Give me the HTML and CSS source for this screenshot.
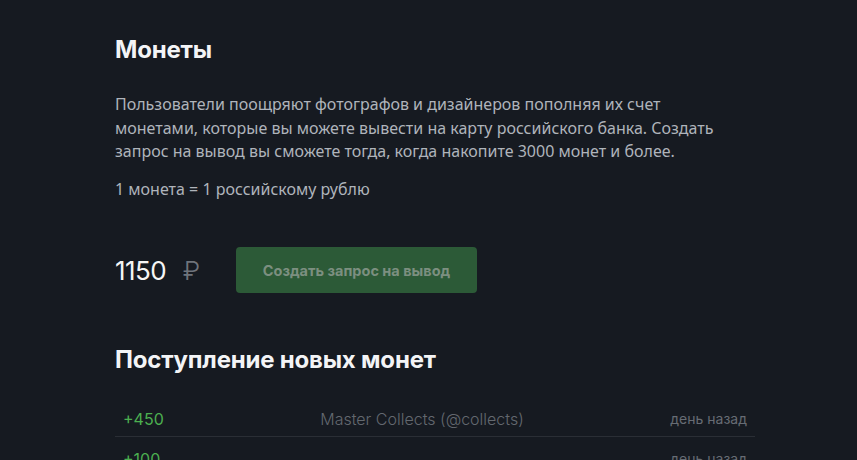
FILE: index.html
```html
<!DOCTYPE html>
<html lang="ru">
<head>
<meta charset="utf-8">
<link rel="stylesheet" href="styles.css">
</head>
<body>
<main class="page">
  <h1 class="title">Монеты</h1>
  <p class="text">Пользователи поощряют фотографов и дизайнеров пополняя их счет монетами, которые вы можете вывести на карту российского банка. Создать запрос на вывод вы сможете тогда, когда накопите 3000 монет и более.</p>
  <p class="text rate">1 монета = 1 российскому рублю</p>
  <div class="balance">
    <div class="amount">1150 <span class="rub">₽</span></div>
    <button class="btn" disabled>Создать запрос на вывод</button>
  </div>
  <h2 class="title sub">Поступление новых монет</h2>
  <div class="list">
    <div class="row">
      <span class="plus">+450</span>
      <span class="who">Master Collects (@collects)</span>
      <span class="when">день назад</span>
    </div>
    <div class="row">
      <span class="plus">+100</span>
      <span class="who"></span>
      <span class="when">день назад</span>
    </div>
  </div>
</main>
</body>
</html>
```
FILE: styles.css
```css
html, body {
  margin: 0;
  padding: 0;
  background: #161a21;
  height: 100%;
  overflow: hidden;
}
body {
  font-family: "Noto Sans", "Open Sans", sans-serif;
  color: #b3b7be;
}
.page {
  width: 640px;
  margin: 0 0 0 115px;
  padding-top: 35px;
}
.title {
  font-family: Inter, "Noto Sans", sans-serif;
  font-weight: 700;
  font-size: 24px;
  color: #f3f4f6;
  margin: 0 0 29px 0;
  letter-spacing: -0.2px;
}
.text {
  font-size: 16px;
  line-height: 23.5px;
  letter-spacing: 0;
  margin: 0;
  color: #afb4bb;
  width: 616px;
}
.rate {
  margin-top: 14px;
}
.balance {
  display: flex;
  align-items: center;
  margin-top: 46px;
  gap: 38px;
}
.amount {
  font-family: Inter, sans-serif;
  font-size: 26px;
  color: #f5f5f5;
  letter-spacing: -0.6px;
  width: 83px;
  white-space: nowrap;
}
.rub {
  color: #6f747c;
  margin-left: 10px;
  font-weight: 300;
}
.btn {
  width: 241px;
  height: 46px;
  background: #2c5a37;
  color: #7c8f80;
  border: none;
  border-radius: 4px;
  font-family: Inter, sans-serif;
  font-weight: 700;
  font-size: 14.5px;
  letter-spacing: 0;
}
.sub {
  margin-top: 52px;
  margin-bottom: 23px;
}
.row {
  display: grid;
  grid-template-columns: 1fr 1fr 1fr;
  align-items: center;
  line-height: 18px;
  padding: 13px 8px 8px;
  border-bottom: 1px solid #2a2e35;
  font-family: Inter, sans-serif;
  font-size: 15px;
}
.plus {
  color: #4caf50;
  font-size: 16px;
}
.who {
  text-align: center;
  color: #63686f;
  font-size: 16px;
  font-weight: 300;
  white-space: nowrap;
  padding-right: 26px;
  letter-spacing: 0;
}
.when {
  text-align: right;
  color: #676c74;
  font-size: 14px;
}
```
